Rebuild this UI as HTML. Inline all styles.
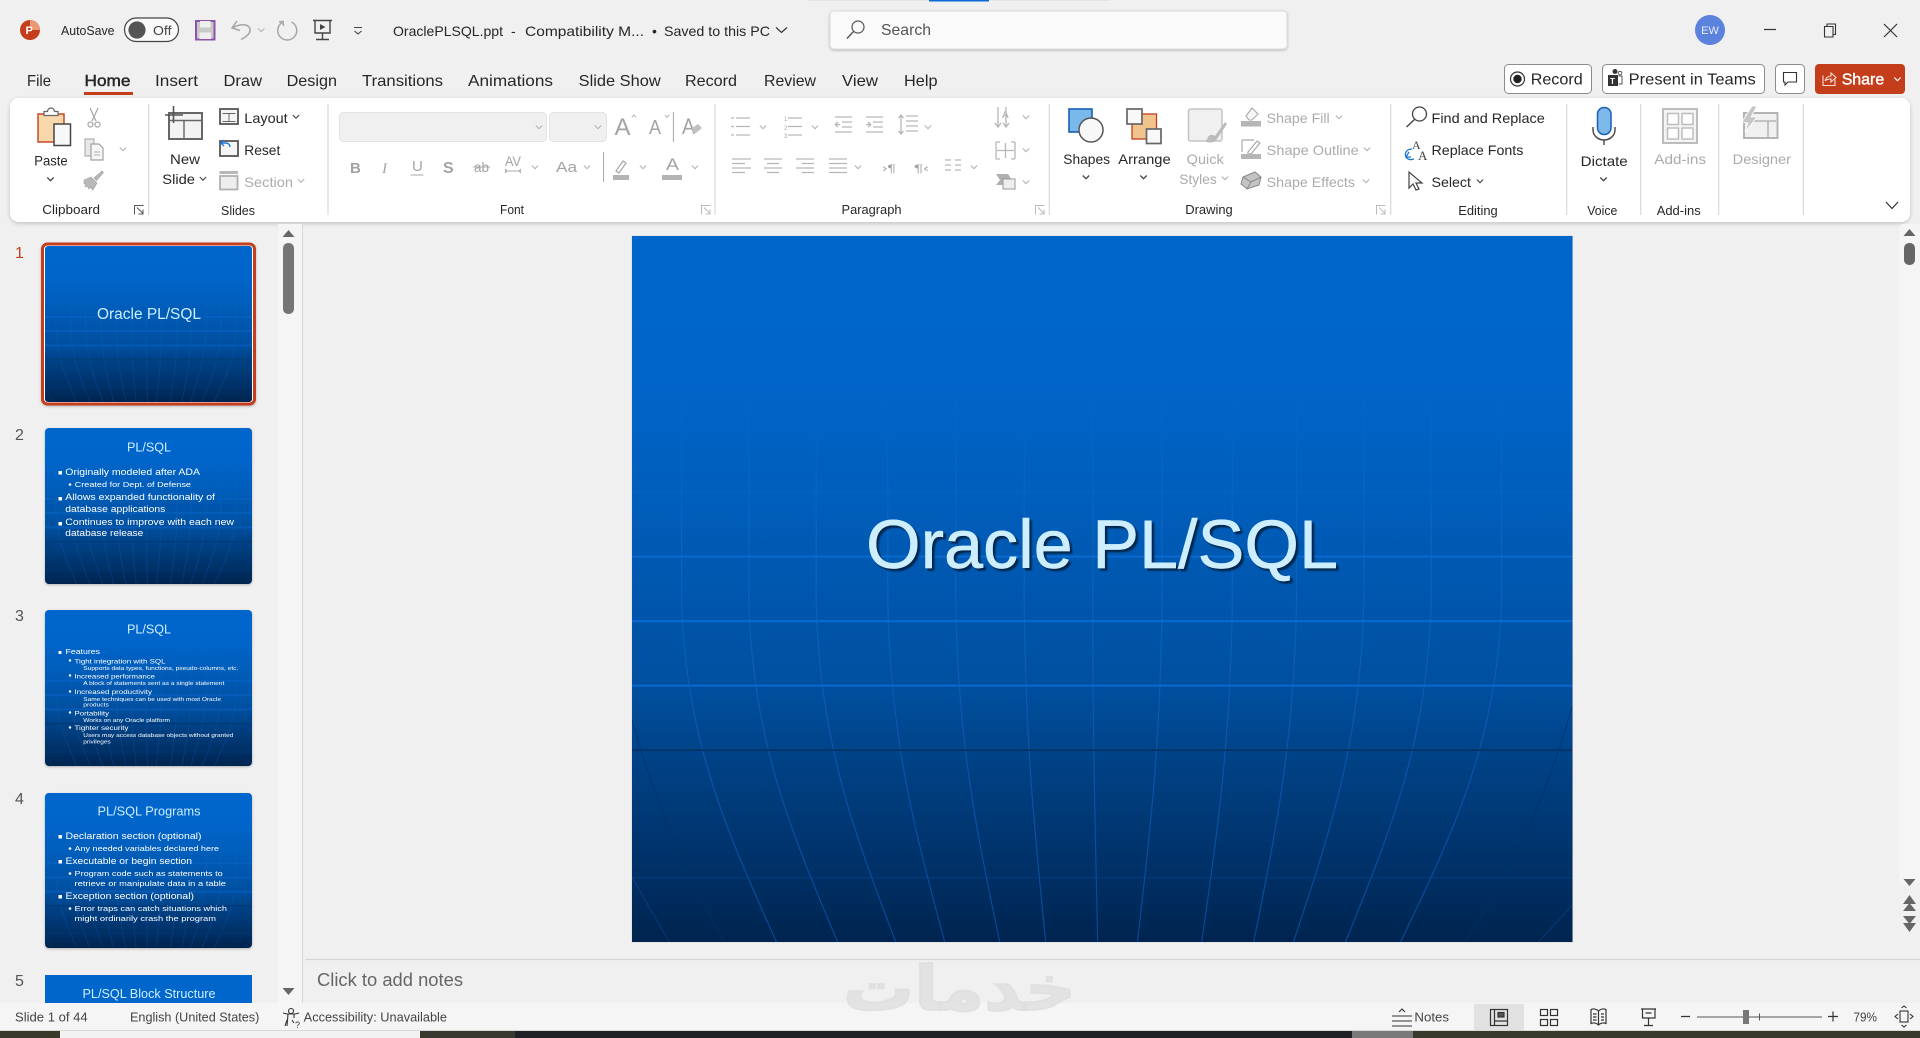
<!DOCTYPE html>
<html><head><meta charset="utf-8"><title>OraclePLSQL.ppt</title>
<style>
html,body{margin:0;padding:0;width:1920px;height:1038px;overflow:hidden;background:#f0f0f0}
svg.page{position:absolute;left:0;top:0;display:block}
text{font-family:"Liberation Sans",sans-serif}
.t{fill:#262626;font-size:14px}
.g{fill:#ababab;font-size:14px}
.tab{fill:#262626;font-size:16px}
.l{fill:#262626;font-size:13px}
.sb{fill:#444;font-size:12.5px}
.b1{fill:#fff;font-family:"DejaVu Sans","Liberation Sans",sans-serif}
.ttl{fill:#cdeeff;font-size:13px;text-anchor:middle}
.dv{stroke:#d9d9d9;stroke-width:1.2}
.ic{fill:none;stroke:#a6a6a6;stroke-width:1.5}
.id{fill:none;stroke:#555;stroke-width:1.5}
.cd{fill:none;stroke:#444;stroke-width:1.1}
.cg{fill:none;stroke:#b4b4b4;stroke-width:1.1}
</style></head><body>
<svg class="page" width="1920" height="1038" viewBox="0 0 1920 1038" xmlns="http://www.w3.org/2000/svg">
<defs>
<linearGradient id="bg" x1="0" y1="0" x2="0" y2="1">
<stop offset="0" stop-color="#0066cc"/><stop offset=".2" stop-color="#0065ca"/><stop offset=".37" stop-color="#005ebb"/><stop offset=".64" stop-color="#004f9f"/><stop offset=".73" stop-color="#004388"/><stop offset=".91" stop-color="#002f64"/><stop offset="1" stop-color="#00244e"/>
</linearGradient>
<linearGradient id="gl" gradientUnits="userSpaceOnUse" x1="0" y1="-400" x2="0" y2="1288">
<stop offset="0" stop-color="#1a72d8" stop-opacity="0"/><stop offset=".3" stop-color="#1a72d8" stop-opacity=".4"/><stop offset="1" stop-color="#0f62cc" stop-opacity=".55"/>
</linearGradient>
<symbol id="grid" viewBox="19 -769 1537 2057" preserveAspectRatio="none">
<g fill="none" stroke="url(#gl)" stroke-width="1.2">
<path vector-effect="non-scaling-stroke" d="M100 -769L100 300C108 700 170 950 255 1288"/>
<path vector-effect="non-scaling-stroke" d="M210 -769L210 300C217 700 275 950 355 1288"/>
<path vector-effect="non-scaling-stroke" d="M320 -769L320 300C326 700 378 950 450 1288"/>
<path vector-effect="non-scaling-stroke" d="M437 -769L437 300C442 700 479 950 530 1288"/>
<path vector-effect="non-scaling-stroke" d="M548 -769L548 300C552 700 580 950 620 1288"/>
<path vector-effect="non-scaling-stroke" d="M660 -769L660 300C662 700 676 950 695 1288"/>
<path vector-effect="non-scaling-stroke" d="M772 -769L772 300C772 700 776 950 780 1288"/>
<path vector-effect="non-scaling-stroke" d="M885 -769L885 300C883 700 867 950 845 1288"/>
<path vector-effect="non-scaling-stroke" d="M1000 -769L1000 300C997 700 977 950 950 1288"/>
<path vector-effect="non-scaling-stroke" d="M1105 -769L1105 300C1101 700 1073 950 1035 1288"/>
<path vector-effect="non-scaling-stroke" d="M1215 -769L1215 300C1209 700 1163 950 1100 1288"/>
<path vector-effect="non-scaling-stroke" d="M1325 -769L1325 300C1318 700 1262 950 1185 1288"/>
<path vector-effect="non-scaling-stroke" d="M1440 -769L1440 300C1432 700 1366 950 1275 1288"/>
<path vector-effect="non-scaling-stroke" opacity=".5" d="M19 1100L80 1288M1556 1180L1500 1288"/>
</g>
<g fill="none" stroke="#003266" stroke-width="1" opacity=".7">
<path vector-effect="non-scaling-stroke" d="M19 640C60 900 110 1100 170 1288M1556 600C1510 880 1460 1080 1380 1288"/>
</g>
<g fill="none">
<path vector-effect="non-scaling-stroke" stroke="#0a6ad0" stroke-opacity=".35" stroke-width="1" d="M19 -211H1556"/>
<path vector-effect="non-scaling-stroke" stroke="#0a6ad0" stroke-opacity=".5" stroke-width="1" d="M19 -23H1556"/>
<path vector-effect="non-scaling-stroke" stroke="#0a6ad0" stroke-width="2" d="M19 165H1556"/>
<path vector-effect="non-scaling-stroke" stroke="#0a6ad0" stroke-width="2" d="M19 353H1556"/>
<path vector-effect="non-scaling-stroke" stroke="#0a6ad0" stroke-width="2" d="M19 541H1556"/>
<path vector-effect="non-scaling-stroke" stroke="#003064" stroke-width="1.6" d="M19 729H1556"/>
<path vector-effect="non-scaling-stroke" stroke="#00458f" stroke-opacity=".55" stroke-width="1.2" d="M19 1100H1556"/>
</g>
</symbol>
<path id="c" d="M-3.2 -1.5L0 1.7 3.2 -1.5"/>
<filter id="sh" x="-2%" y="-10%" width="104%" height="125%"><feDropShadow dx="0" dy="1.5" stdDeviation="2" flood-color="#000" flood-opacity=".2"/></filter>
<filter id="sh2" x="-5%" y="-10%" width="110%" height="125%"><feDropShadow dx="0" dy="1" stdDeviation="1.2" flood-color="#000" flood-opacity=".25"/></filter>
<filter id="sh3" x="-3%" y="-10%" width="106%" height="125%"><feDropShadow dx="2.5" dy="2.5" stdDeviation=".8" flood-color="#00264d" flood-opacity="1"/></filter>
</defs>

<rect width="1920" height="1038" fill="#f0f0f0"/>
<!-- top strip -->
<rect x="808" y="0" width="121" height="1" fill="#e4e4e4"/><rect x="929" y="0" width="60" height="1.5" fill="#0a6ad6"/><rect x="989" y="0" width="121" height="1" fill="#e4e4e4"/>

<!-- title bar -->
<circle cx="30" cy="30" r="10" fill="#c43e1c"/><path d="M30 20a10 10 0 0 1 10 10h-7l-3-3z" fill="#ea9a73"/><text x="25.5" y="34" font-size="11" font-weight="700" fill="#fff">P</text>
<text class="t" x="61" y="35" style="font-size:13px" textLength="53.5" lengthAdjust="spacingAndGlyphs">AutoSave</text>
<rect x="124.5" y="18" width="54" height="23.5" rx="11.7" fill="#fafafa" stroke="#444" stroke-width="1.2"/><circle cx="137" cy="30" r="8.6" fill="#555"/>
<text x="153" y="35" style="font-size:13px" fill="#444" textLength="18.5" lengthAdjust="spacingAndGlyphs">Off</text>
<rect x="196" y="21" width="18.5" height="18.5" fill="#c9c9c9" stroke="#8a55a8" stroke-width="2"/><rect x="200" y="21" width="10.5" height="6.5" fill="#efefef"/><rect x="199.5" y="32.5" width="11.5" height="6.5" fill="#efefef"/>
<path class="ic" d="M237 21L232 28 240 30.5M232 28C243 22 251 25 250 31 249.5 34 246 37 241 39.5"/>
<path class="cg" d="M258 28.5l3.2 3 3.2-3"/>
<path class="ic" d="M283 22A9.5 9.5 0 1 0 291.5 22M279 22l4-.5.5 4.500"/>
<g fill="none" stroke="#444" stroke-width="1.4"><path d="M313 20.5h19M315 20.5v12.5h15v-12.5M322.5 33v6M316 39.5h13"/></g><path d="M320 24l5.5 3-5.5 3z" fill="#444"/>
<path class="cd" d="M354 27.5h8M354.5 31l3.500 3 3.500-3"/>
<g class="t" style="font-size:14px">
<text x="393" y="36" textLength="110" lengthAdjust="spacingAndGlyphs">OraclePLSQL.ppt</text>
<text x="511" y="36">-</text>
<text x="525" y="36" textLength="119" lengthAdjust="spacingAndGlyphs">Compatibility M...</text>
<text x="652" y="36">•</text>
<text x="664" y="36" textLength="106" lengthAdjust="spacingAndGlyphs">Saved to this PC</text>
</g>
<path d="M776 27.5l5.5 5 5.5-5" fill="none" stroke="#333" stroke-width="1.2"/>
<rect x="830" y="11" width="457" height="38" rx="4" fill="#fafafa" stroke="#dedede" filter="url(#sh2)"/>
<circle cx="858" cy="27" r="6" fill="none" stroke="#555" stroke-width="1.2"/><path d="M853.5 31.5L847 38.5" stroke="#555" stroke-width="1.4"/>
<text x="881" y="35" style="font-size:16px" fill="#555" textLength="50" lengthAdjust="spacingAndGlyphs">Search</text>
<circle cx="1710" cy="30" r="15" fill="#5b82dc"/><text x="1710" y="34" text-anchor="middle" style="font-size:11px" fill="#e8eefc">EW</text>
<path d="M1764 29.5h12" stroke="#333" stroke-width="1.2"/>
<path d="M1824.5 26.5h8.5v10.5h-8.5zM1827 26.5v-2.5h8.5v10.5h-2.5" fill="none" stroke="#333" stroke-width="1.1"/>
<path d="M1884 24l13 13M1897 24l-13 13" stroke="#333" stroke-width="1.2"/>

<!-- tabs -->
<g class="tab" style="font-size:16px">
<text x="27" y="86" textLength="24" lengthAdjust="spacingAndGlyphs">File</text>
<text x="84.5" y="86" stroke="#262626" stroke-width=".45" textLength="46" lengthAdjust="spacingAndGlyphs">Home</text>
<text x="155" y="86" textLength="43" lengthAdjust="spacingAndGlyphs">Insert</text>
<text x="223.5" y="86" textLength="38.5" lengthAdjust="spacingAndGlyphs">Draw</text>
<text x="286.6" y="86" textLength="50.4" lengthAdjust="spacingAndGlyphs">Design</text>
<text x="362" y="86" textLength="81" lengthAdjust="spacingAndGlyphs">Transitions</text>
<text x="468" y="86" textLength="85" lengthAdjust="spacingAndGlyphs">Animations</text>
<text x="578.7" y="86" textLength="82" lengthAdjust="spacingAndGlyphs">Slide Show</text>
<text x="685" y="86" textLength="52" lengthAdjust="spacingAndGlyphs">Record</text>
<text x="764" y="86" textLength="52" lengthAdjust="spacingAndGlyphs">Review</text>
<text x="842" y="86" textLength="36" lengthAdjust="spacingAndGlyphs">View</text>
<text x="904" y="86" textLength="33.5" lengthAdjust="spacingAndGlyphs">Help</text>
</g>
<rect x="84" y="92" width="49" height="3" fill="#c43e1c"/>

<!-- top right buttons -->
<rect x="1504.5" y="64.5" width="87" height="29" rx="4" fill="#fff" stroke="#8c8c8c"/>
<circle cx="1517.5" cy="79" r="7" fill="none" stroke="#333" stroke-width="1.2"/><circle cx="1517.5" cy="79" r="4.2" fill="#222"/>
<text x="1530.7" y="84.5" style="font-size:16px" fill="#262626" textLength="52" lengthAdjust="spacingAndGlyphs">Record</text>
<rect x="1602.5" y="64.5" width="162" height="29" rx="4" fill="#fff" stroke="#8c8c8c"/>
<rect x="1608" y="75" width="10" height="11" fill="#333"/><circle cx="1615" cy="71.5" r="2.5" fill="#333"/><path d="M1618.5 76h3.5v8h-3.5" fill="none" stroke="#555"/><circle cx="1620" cy="73" r="1.8" fill="none" stroke="#555"/><text x="1610" y="84" style="font-size:8px;font-weight:700" fill="#fff">T</text>
<text x="1628.7" y="84.5" style="font-size:16px" fill="#262626" textLength="127" lengthAdjust="spacingAndGlyphs">Present in Teams</text>
<rect x="1775.5" y="64.5" width="29" height="29" rx="4" fill="#fff" stroke="#8c8c8c"/>
<path d="M1783.5 72.5h13v9.5h-8.5l-3 3v-3h-1.5z" fill="none" stroke="#333" stroke-width="1.1"/>
<rect x="1815" y="64" width="90" height="30" rx="4" fill="#c43e1c"/>
<path d="M1823 75.5v10h12v-6M1825 81c1-3 3-5 6-5v-3l5 4.5-5 4.5v-3c-3 0-5 1-6 2" fill="none" stroke="#f6dbd2" stroke-width="1.1"/>
<text x="1841.7" y="84.5" style="font-size:16px" fill="#fff" stroke="#fff" stroke-width=".4" textLength="42.5" lengthAdjust="spacingAndGlyphs">Share</text>
<use href="#c" x="1897.5" y="79" fill="none" stroke="#fff" stroke-width="1.1"/>

<!-- ribbon -->
<rect x="10" y="98" width="1900" height="124" rx="9" fill="#fff" filter="url(#sh)"/>
<g class="dv">
<path d="M148.7 104V215M328 104V215M715 104V215M1049.3 104V215M1390.7 104V215M1566.7 104V215M1640.7 104V215M1718.7 104V215M1803.3 104V215"/>
</g>

<!-- group labels -->
<g class="l" style="font-size:13px">
<text x="42.3" y="214" textLength="57.7" lengthAdjust="spacingAndGlyphs">Clipboard</text>
<text x="221" y="215" textLength="34" lengthAdjust="spacingAndGlyphs">Slides</text>
<text x="500" y="214" textLength="24" lengthAdjust="spacingAndGlyphs">Font</text>
<text x="841.5" y="214" textLength="60" lengthAdjust="spacingAndGlyphs">Paragraph</text>
<text x="1185.3" y="214" textLength="47.4" lengthAdjust="spacingAndGlyphs">Drawing</text>
<text x="1458.3" y="215" textLength="39.4" lengthAdjust="spacingAndGlyphs">Editing</text>
<text x="1587.3" y="215" textLength="30" lengthAdjust="spacingAndGlyphs">Voice</text>
<text x="1656.7" y="215" textLength="44" lengthAdjust="spacingAndGlyphs">Add-ins</text>
</g>
<!-- dialog launchers -->
<path d="M134.5 214.5v-9h9M137 207.5l6 6M143 209.5v4.5h-4.5" fill="none" stroke="#555"/>
<g fill="none" stroke="#bbb"><path d="M701.5 214.5v-9h9M704 207.5l6 6M710 209.5v4.5h-4.5"/><path d="M1035.5 214.5v-9h9M1038 207.5l6 6M1044 209.5v4.5h-4.5"/><path d="M1376.5 214.5v-9h9M1379 207.5l6 6M1385 209.5v4.5h-4.5"/></g>

<!-- clipboard -->
<rect x="38" y="114" width="26" height="28" fill="#f8d8ab" stroke="#c43e1c" stroke-width="1.4"/>
<path d="M44 115.5h14v-4h-3.5a3.5 3.5 0 0 0-7 0H44z" fill="#fff" stroke="#666" stroke-width="1.2"/>
<rect x="54" y="124" width="16.5" height="21.5" fill="#f8f8f8" stroke="#444" stroke-width="1.5"/>
<text class="t" x="34.3" y="165.5" textLength="33.4" lengthAdjust="spacingAndGlyphs">Paste</text>
<use href="#c" x="50.5" y="179" class="cd" style="stroke-width:1.3"/>
<g class="ic" style="stroke-width:1.2"><path d="M90 108l6 13M98 108l-6 13"/><circle cx="90.5" cy="124.5" r="2.5"/><circle cx="97.5" cy="124.5" r="2.5"/></g>
<path d="M85 139h9v17h-9z" fill="#e8e8e8" stroke="#b0b0b0" stroke-width="1.2"/><path d="M91 144h8l4 4v12H91z" fill="#f6f6f6" stroke="#a0a0a0" stroke-width="1.2"/><path d="M94 152h6M94 155h6" stroke="#b0b0b0"/>
<use href="#c" x="123" y="149" class="cg"/>
<path d="M84 180l7-3 6 6-4 7-3-3-1 2-2-3-2 1 1-3-2 0zM94 178l8-7 1.5 1.5-7 8z" fill="#b8b8b8" stroke="#a0a0a0" stroke-width=".6"/>

<!-- slides -->
<rect x="169" y="113" width="33" height="26" fill="#f3f3f3" stroke="#666" stroke-width="2"/><path d="M170 120.5h31M184 120.5V138" stroke="#666" stroke-width="1.4"/><path d="M173.5 106v17M165 115h18" stroke="#555" stroke-width="1.6"/>
<text class="t" x="170" y="164" textLength="30" lengthAdjust="spacingAndGlyphs">New</text>
<text class="t" x="162.3" y="184" textLength="32.7" lengthAdjust="spacingAndGlyphs">Slide</text>
<use href="#c" x="203" y="178.5" class="cd"/>
<rect x="220" y="109" width="18" height="15" fill="#f5f5f5" stroke="#555" stroke-width="1.8"/><path d="M222.5 113.5h13M229 113.5v8.5M222.5 121.5h13" stroke="#666" stroke-width="1"/>
<text class="t" x="244.3" y="123" textLength="43.4" lengthAdjust="spacingAndGlyphs">Layout</text>
<use href="#c" x="296" y="116.5" class="cd"/>
<rect x="220" y="141" width="18" height="15" fill="#f5f5f5" stroke="#555" stroke-width="1.8"/><path d="M224 140l-3 3 3 3M221 143h5a4 4 0 0 1 4 4" fill="none" stroke="#1e78d7" stroke-width="1.4"/>
<text class="t" x="244.3" y="155" textLength="36" lengthAdjust="spacingAndGlyphs">Reset</text>
<rect x="219.5" y="171" width="18.5" height="3" fill="#b8b8b8"/><rect x="220" y="176" width="17.5" height="13.5" fill="#eee" stroke="#b0b0b0" stroke-width="1.8"/>
<text class="g" x="244.3" y="187" textLength="48.7" lengthAdjust="spacingAndGlyphs">Section</text>
<use href="#c" x="301" y="180.5" class="cg"/>

<!-- font -->
<rect x="339.5" y="112.5" width="207" height="29" rx="4" fill="#f0f0f0" stroke="#e2e2e2"/>
<rect x="549.5" y="112.5" width="57" height="29" rx="4" fill="#f0f0f0" stroke="#e2e2e2"/>
<use href="#c" x="539" y="127" class="cg"/><use href="#c" x="598" y="127" class="cg"/>
<g fill="#a3a3a3" stroke="none">
<text x="614.5" y="135" style="font-size:24px" textLength="16" lengthAdjust="spacingAndGlyphs">A</text>
<text x="649" y="134" style="font-size:20px" textLength="12" lengthAdjust="spacingAndGlyphs">A</text>
<text x="682" y="134" style="font-size:22px" textLength="13" lengthAdjust="spacingAndGlyphs">A</text>
<text x="350" y="173" style="font-size:15px;font-weight:700">B</text>
<text x="382" y="173" style="font-size:15px;font-style:italic;font-family:'Liberation Serif',serif">I</text>
<text x="412" y="171" style="font-size:15px">U</text>
<text x="443" y="173" style="font-size:16px;font-weight:700">S</text>
<text x="474" y="172" style="font-size:14px" textLength="15" lengthAdjust="spacingAndGlyphs">ab</text>
<text x="505" y="166" style="font-size:14px" textLength="16" lengthAdjust="spacingAndGlyphs">AV</text>
<text x="556" y="172" style="font-size:15px" textLength="21" lengthAdjust="spacingAndGlyphs">Aa</text>
<text x="666" y="170" style="font-size:17px" textLength="13" lengthAdjust="spacingAndGlyphs">A</text>
<text x="882" y="172" style="font-size:11px" textLength="14" lengthAdjust="spacingAndGlyphs">›¶</text>
<text x="914" y="172" style="font-size:11px" textLength="15" lengthAdjust="spacingAndGlyphs">¶‹</text>
<text x="1002" y="118" style="font-size:10px">A</text>
</g>
<path d="M632 117.5l2 -2.5 2 2.5M665 115l2 2.5 2-2.5" fill="none" stroke="#aaa" stroke-width=".9"/>
<path class="ic" style="stroke-width:1" d="M673.4 112v30M603.6 152v30"/>
<path d="M692 128l6-4 4 4-6 5-3.5 0z" fill="#c0c0c0"/>
<path d="M410.5 175h13M473 167h17M505 171h16" stroke="#aaa"/>
<path d="M507 171l-2 -2M507 171l-2 2M519 171l2 -2M519 171l2 2" stroke="#aaa"/>
<rect x="613" y="175" width="16" height="5" fill="#b4b4b4"/><path d="M616 171l7-10 3 2-7 10z" fill="none" stroke="#a8a8a8" stroke-width="1.2"/>
<rect x="662" y="175" width="20" height="5" fill="#b4b4b4"/>
<g class="cg"><use href="#c" x="535" y="167"/><use href="#c" x="587" y="167"/><use href="#c" x="643" y="167"/><use href="#c" x="695" y="167"/></g>

<!-- paragraph -->
<g fill="none" stroke="#b6b6b6" stroke-width="1.3">
<path d="M736 118h14M736 126.5h14M736 135h14M731 118h3M731 126.5h3M731 135h3"/>
<path d="M788 118h14M788 126.5h14M788 135h14"/>
<path d="M835 117h17M842 122h10M842 127h10M835 132h17M835 124.5h5M835 124.5l3-2.5M835 124.5l3 2.5"/>
<path d="M866 117h17M873 122h10M873 127h10M866 132h17M866 124.5h5M871 124.5l-3-2.5M871 124.5l-3 2.5"/>
<path d="M906 116h12M906 121h12M906 126h12M906 131h12M901 115v19M898.5 118l2.5-3 2.5 3M898.5 131l2.5 3 2.5-3"/>
<path d="M732 159h19M732 163.5h13M732 168h19M732 172.5h13"/>
<path d="M764 159h18M767 163.5h12M764 168h18M767 172.5h12"/>
<path d="M796 159h18M802 163.5h12M796 168h18M802 172.5h12"/>
<path d="M829 159h18M829 163.5h18M829 168h18M829 172.5h18"/>
<path d="M945 160h6M945 165h6M945 170h6M955 160h6M955 165h6M955 170h6"/>
<path d="M998 107v20M995 123l3 4 3-4M1006 107v20M1003 123l3 4 3-4"/>
<path d="M996 142h4M996 159h4M996 142v17M1015 142h-4M1015 159h-4M1015 142v17M997 150.5h17M1005.5 143v15"/>
</g>
<text x="784" y="121" style="font-size:6px" fill="#aaa">1</text><text x="784" y="130" style="font-size:6px" fill="#aaa">2</text><text x="784" y="138" style="font-size:6px" fill="#aaa">3</text>
<path d="M996 174h12l4 6-4 5h-12l4-5z" fill="#b0b0b0"/><rect x="1003" y="179" width="12" height="10" fill="#eee" stroke="#999"/>
<g class="cg"><use href="#c" x="763" y="127"/><use href="#c" x="815" y="127"/><use href="#c" x="928" y="127"/><use href="#c" x="858" y="167"/><use href="#c" x="974" y="167"/><use href="#c" x="1026" y="117"/><use href="#c" x="1026" y="150"/><use href="#c" x="1026" y="182"/></g>

<!-- drawing -->
<rect x="1069" y="109" width="23" height="23" fill="#79b8ea" stroke="#1a5fb4" stroke-width="1.6"/><circle cx="1091" cy="130" r="12" fill="#f8f8f8" stroke="#555" stroke-width="1.5"/>
<text class="t" x="1063.3" y="164" textLength="46.7" lengthAdjust="spacingAndGlyphs">Shapes</text><use href="#c" x="1086" y="177" class="cd" style="stroke-width:1.3"/>
<rect x="1132" y="114" width="24.5" height="25" fill="#f2c48d" stroke="#c43e1c" stroke-width="1.3"/>
<rect x="1127" y="109" width="15" height="15" fill="#f8f8f8" stroke="#666" stroke-width="1.7"/><rect x="1146.5" y="129" width="14.5" height="14.5" fill="#f8f8f8" stroke="#666" stroke-width="1.7"/>
<text class="t" x="1118.3" y="164" textLength="52.4" lengthAdjust="spacingAndGlyphs">Arrange</text><use href="#c" x="1143.5" y="177" class="cd" style="stroke-width:1.3"/>
<rect x="1188.5" y="109" width="33.5" height="32" rx="2" fill="#f0f0f0" stroke="#c4c4c4" stroke-width="1.5"/>
<path d="M1225 122l-10 14c-3-2-6-1-7 1l-2 5c4 1 9 1 11-3l10-15z" fill="#bbb"/>
<text class="g" x="1186.7" y="164" textLength="37" lengthAdjust="spacingAndGlyphs">Quick</text>
<text class="g" x="1179.3" y="184" textLength="37.4" lengthAdjust="spacingAndGlyphs">Styles</text><use href="#c" x="1225" y="178" class="cg"/>
<path d="M1246 116l6-8 6 6-6 6-3 0z" fill="#f6f6f6" stroke="#aaa" stroke-width="1.1"/><rect x="1241" y="121" width="20" height="5.5" fill="#b6b6b6"/>
<text class="g" x="1266.7" y="123" textLength="63" lengthAdjust="spacingAndGlyphs">Shape Fill</text><use href="#c" x="1339" y="117" class="cg"/>
<path d="M1242 140h12M1242 140v12M1248 152l9-11 3 2-9 11h-3z" fill="none" stroke="#aaa" stroke-width="1.2"/><rect x="1241" y="154" width="20" height="5" fill="#b6b6b6"/>
<text class="g" x="1266.7" y="155" textLength="92" lengthAdjust="spacingAndGlyphs">Shape Outline</text><use href="#c" x="1367" y="149" class="cg"/>
<path d="M1241 184l2-7 12-5 6 5-2 8-12 4z" fill="#c4c4c4" stroke="#888"/><path d="M1243 177l8 5 10-5M1251 182l-4 7" fill="none" stroke="#888"/>
<text class="g" x="1266.7" y="187" textLength="88.3" lengthAdjust="spacingAndGlyphs">Shape Effects</text><use href="#c" x="1366" y="181" class="cg"/>

<!-- editing -->
<circle cx="1419.5" cy="114" r="7" fill="none" stroke="#444" stroke-width="1.3"/><path d="M1414.5 119.5L1406.5 127" stroke="#444" stroke-width="1.4"/>
<text class="t" x="1431.5" y="123" textLength="113.3" lengthAdjust="spacingAndGlyphs">Find and Replace</text>
<text x="1412" y="149" style="font-size:12px;font-family:'Liberation Serif',serif" fill="#444">A</text><text x="1418" y="160" style="font-size:13px;font-family:'Liberation Serif',serif" fill="#444">A</text>
<path d="M1412 149c-5 0-8 4-6 8M1409 152l-3 5 5 0M1406 157c2 3 5 3 8 2" fill="none" stroke="#1e78d7" stroke-width="1.3"/>
<text class="t" x="1431.5" y="155" textLength="91.9" lengthAdjust="spacingAndGlyphs">Replace Fonts</text>
<path d="M1409 172v16l4-4 3 6 3-1-3-6h6z" fill="#f8f8f8" stroke="#444" stroke-width="1.2"/>
<text class="t" x="1431.5" y="187" textLength="39.5" lengthAdjust="spacingAndGlyphs">Select</text><use href="#c" x="1480" y="181" class="cd"/>

<!-- voice -->
<rect x="1597.5" y="107.5" width="13.5" height="27" rx="6.7" fill="#7db9ea" stroke="#1a5fb4" stroke-width="1.5"/>
<path d="M1593 127v3a11 10 0 0 0 22 0v-3M1604 140v5" fill="none" stroke="#444" stroke-width="1.4"/>
<text class="t" x="1580.7" y="166" textLength="47" lengthAdjust="spacingAndGlyphs">Dictate</text><use href="#c" x="1603.5" y="179" class="cd" style="stroke-width:1.3"/>
<!-- add-ins -->
<rect x="1663" y="109" width="34" height="34" fill="#f4f4f4" stroke="#bdbdbd" stroke-width="2"/>
<g fill="#fff" stroke="#bdbdbd" stroke-width="1.5"><rect x="1667.5" y="113.5" width="11" height="11"/><rect x="1682" y="113.5" width="11" height="11"/><rect x="1667.5" y="128" width="11" height="11"/><rect x="1682" y="128" width="11" height="11"/></g>
<text class="g" x="1654.3" y="164" textLength="51.7" lengthAdjust="spacingAndGlyphs">Add-ins</text>
<!-- designer -->
<rect x="1744" y="113" width="33.5" height="25" fill="#f0f0f0" stroke="#b4b4b4" stroke-width="2"/><path d="M1748 121h28M1768 121v16" stroke="#b4b4b4" stroke-width="1.5"/>
<path d="M1752 106l-10 16 6 1-3 9 12-15h-6l6-11z" fill="#c6c6c6" stroke="#fff" stroke-width=".8"/>
<text class="g" x="1732.7" y="164" textLength="58.3" lengthAdjust="spacingAndGlyphs">Designer</text>
<path d="M1886 202l6 6.5 6-6.5" fill="none" stroke="#333" stroke-width="1.2"/>

<!-- panes -->
<rect x="278" y="224" width="24" height="779" fill="#f5f5f5"/><path d="M302.5 224V1003" stroke="#dadada" stroke-width="1"/>
<path d="M282.5 237l6-7 6 7z" fill="#666"/>
<rect x="283" y="243" width="11" height="71" rx="5" fill="#757575"/>
<path d="M282.5 988l6 7 6-7z" fill="#666"/>

<rect x="1899" y="224" width="21" height="660" rx="4" fill="#f5f5f5"/>
<path d="M1903.5 236l6-7 6 7z" fill="#666"/><rect x="1904" y="243" width="11" height="22" rx="5" fill="#666"/>
<path d="M1903.5 879l6 7 6-7z" fill="#666"/>
<path d="M1903 904l6.5-9 6.5 9zM1903 911l6.5-8 6.5 8z" fill="#666"/>
<path d="M1903 916l6.5 8 6.5-8zM1903 923l6.5 9 6.5-9z" fill="#666"/>

<!-- thumbnails -->
<g>
<rect x="42.5" y="244" width="212" height="160" rx="5" fill="#fff" stroke="#c43e1c" stroke-width="3" filter="url(#sh2)"/>
<rect x="45" y="246" width="207" height="156" rx="3" fill="url(#bg)"/><use href="#grid" x="45" y="246" width="207" height="156" opacity=".4"/>
<text class="ttl" x="149" y="319" style="font-size:15.5px" textLength="104" lengthAdjust="spacingAndGlyphs">Oracle PL/SQL</text>

<rect x="45" y="428" width="207" height="156" rx="4" fill="url(#bg)" filter="url(#sh2)"/><use href="#grid" x="45" y="428" width="207" height="156" opacity=".4"/>
<text class="ttl" x="149" y="451.5" textLength="44" lengthAdjust="spacingAndGlyphs">PL/SQL</text>
<g class="b1">
<rect x="58.5" y="471" width="3.5" height="3.5"/><text x="65.3" y="475" style="font-size:9px" textLength="134.7" lengthAdjust="spacingAndGlyphs">Originally modeled after ADA</text>
<circle cx="70" cy="484.5" r="1.3"/><text x="74.7" y="487" style="font-size:7.5px" textLength="116.3" lengthAdjust="spacingAndGlyphs">Created for Dept. of Defense</text>
<rect x="58.5" y="497" width="3.5" height="3.5"/><text x="65.3" y="500" style="font-size:9px" textLength="149.7" lengthAdjust="spacingAndGlyphs">Allows expanded functionality of</text>
<text x="65.3" y="512" style="font-size:9px" textLength="100" lengthAdjust="spacingAndGlyphs">database applications</text>
<rect x="58.5" y="522" width="3.5" height="3.5"/><text x="65.3" y="525" style="font-size:9px" textLength="168.7" lengthAdjust="spacingAndGlyphs">Continues to improve with each new</text>
<text x="65.3" y="536" style="font-size:9px" textLength="78" lengthAdjust="spacingAndGlyphs">database release</text>
</g>

<rect x="45" y="610" width="207" height="156" rx="4" fill="url(#bg)" filter="url(#sh2)"/><use href="#grid" x="45" y="610" width="207" height="156" opacity=".4"/>
<text class="ttl" x="149" y="633.5" textLength="44" lengthAdjust="spacingAndGlyphs">PL/SQL</text>
<g class="b1">
<rect x="58.5" y="651" width="3" height="3"/><text x="65.5" y="654" style="font-size:7.5px" textLength="34.5" lengthAdjust="spacingAndGlyphs">Features</text>
<circle cx="70" cy="660.5" r="1.2"/><text x="74.5" y="663.5" style="font-size:6.5px" textLength="91" lengthAdjust="spacingAndGlyphs">Tight integration with SQL</text>
<text x="83.3" y="670" style="font-size:5.3px" textLength="155" lengthAdjust="spacingAndGlyphs">Supports data types, functions, pseudo-columns, etc.</text>
<circle cx="70" cy="675.5" r="1.2"/><text x="74.5" y="678.5" style="font-size:6.5px" textLength="80.5" lengthAdjust="spacingAndGlyphs">Increased performance</text>
<text x="83.3" y="685" style="font-size:5.3px" textLength="141" lengthAdjust="spacingAndGlyphs">A block of statements sent as a single statement</text>
<circle cx="70" cy="691.5" r="1.2"/><text x="74.5" y="694" style="font-size:6.5px" textLength="77.5" lengthAdjust="spacingAndGlyphs">Increased productivity</text>
<text x="83.3" y="701" style="font-size:5.3px" textLength="137.7" lengthAdjust="spacingAndGlyphs">Same techniques can be used with most Oracle</text>
<text x="83.3" y="706.5" style="font-size:5.3px" textLength="25.5" lengthAdjust="spacingAndGlyphs">products</text>
<circle cx="70" cy="712.5" r="1.2"/><text x="74.5" y="715.5" style="font-size:6.5px" textLength="34.5" lengthAdjust="spacingAndGlyphs">Portability</text>
<text x="83.3" y="722" style="font-size:5.3px" textLength="86.7" lengthAdjust="spacingAndGlyphs">Works on any Oracle platform</text>
<circle cx="70" cy="727.5" r="1.2"/><text x="74.5" y="730" style="font-size:6.5px" textLength="54" lengthAdjust="spacingAndGlyphs">Tighter security</text>
<text x="83.3" y="737" style="font-size:5.3px" textLength="150" lengthAdjust="spacingAndGlyphs">Users may access database objects without granted</text>
<text x="83.3" y="743.5" style="font-size:5.3px" textLength="27.5" lengthAdjust="spacingAndGlyphs">privileges</text>
</g>

<rect x="45" y="793" width="207" height="155" rx="4" fill="url(#bg)" filter="url(#sh2)"/><use href="#grid" x="45" y="793" width="207" height="155" opacity=".4"/>
<text class="ttl" x="149" y="815.5" textLength="103" lengthAdjust="spacingAndGlyphs">PL/SQL Programs</text>
<g class="b1">
<rect x="58.5" y="835" width="3.5" height="3.5"/><text x="65.5" y="839" style="font-size:9px" textLength="136" lengthAdjust="spacingAndGlyphs">Declaration section (optional)</text>
<circle cx="70" cy="848.5" r="1.3"/><text x="74.5" y="851" style="font-size:7.5px" textLength="144.5" lengthAdjust="spacingAndGlyphs">Any needed variables declared here</text>
<rect x="58.5" y="860" width="3.5" height="3.5"/><text x="65.5" y="864" style="font-size:9px" textLength="126.5" lengthAdjust="spacingAndGlyphs">Executable or begin section</text>
<circle cx="70" cy="873.5" r="1.3"/><text x="74.5" y="876" style="font-size:7.5px" textLength="148.2" lengthAdjust="spacingAndGlyphs">Program code such as statements to</text>
<text x="74.5" y="886" style="font-size:7.5px" textLength="151.5" lengthAdjust="spacingAndGlyphs">retrieve or manipulate data in a table</text>
<rect x="58.5" y="895" width="3.5" height="3.5"/><text x="65.5" y="899" style="font-size:9px" textLength="128.5" lengthAdjust="spacingAndGlyphs">Exception section (optional)</text>
<circle cx="70" cy="908.5" r="1.3"/><text x="74.5" y="911" style="font-size:7.5px" textLength="152.5" lengthAdjust="spacingAndGlyphs">Error traps can catch situations which</text>
<text x="74.5" y="921" style="font-size:7.5px" textLength="141.5" lengthAdjust="spacingAndGlyphs">might ordinarily crash the program</text>
</g>

<rect x="45" y="975" width="207" height="28" fill="#0066cc"/>
<text class="ttl" x="149" y="998" textLength="133" lengthAdjust="spacingAndGlyphs">PL/SQL Block Structure</text>

<g fill="#555">
<text x="15" y="258" style="font-size:16px" fill="#c43e1c">1</text>
<text x="15" y="440" style="font-size:16px">2</text>
<text x="15" y="621" style="font-size:16px">3</text>
<text x="15" y="804" style="font-size:16px">4</text>
<text x="15" y="986" style="font-size:16px">5</text>
</g>
</g>

<!-- main slide -->
<rect x="631.5" y="235.5" width="941.5" height="707" fill="#d8d8d8"/>
<rect x="632" y="236" width="940.5" height="706" fill="url(#bg)"/>
<use href="#grid" x="632" y="236" width="940.5" height="706"/>
<text x="866" y="568" style="font-size:69px" fill="#cdeeff" stroke="#cdeeff" stroke-width=".5" filter="url(#sh3)" textLength="472" lengthAdjust="spacingAndGlyphs">Oracle PL/SQL</text>

<!-- notes -->
<path d="M305 959.5H1920" stroke="#d6d6d6" stroke-width="1.2"/>
<text x="317" y="986" style="font-size:18px" fill="#666" textLength="146" lengthAdjust="spacingAndGlyphs">Click to add notes</text>

<!-- status bar -->
<rect x="0" y="1003" width="1920" height="27" fill="#f5f5f5"/>
<g class="sb" style="font-size:12.5px">
<text x="15" y="1021.5" textLength="72.7" lengthAdjust="spacingAndGlyphs">Slide 1 of 44</text>
<text x="130" y="1021.5" textLength="129.3" lengthAdjust="spacingAndGlyphs">English (United States)</text>
<text x="303.7" y="1021.5" textLength="143.3" lengthAdjust="spacingAndGlyphs">Accessibility: Unavailable</text>
<text x="1414.4" y="1021.5" textLength="34.6" lengthAdjust="spacingAndGlyphs">Notes</text>
<text x="1853.5" y="1021.5" textLength="23.5" lengthAdjust="spacingAndGlyphs">79%</text>
</g>
<g fill="none" stroke="#333" stroke-width="1.1"><circle cx="291" cy="1011" r="2.5"/><path d="M283 1013l4 1h8l4-1M288 1014l-1 12M294 1014v4M287 1020l-2 6M292 1020l2 3"/></g>
<text x="295" y="1028" style="font-size:9px" fill="#333">?</text>
<path d="M1392 1016h20M1392 1021h20M1392 1026h20" stroke="#333" stroke-width="1.1"/><path d="M1399 1012l3-3 3 3" fill="none" stroke="#333" stroke-width="1.1"/>
<rect x="1474" y="1004" width="50" height="26" fill="#e1e1e1"/>
<g fill="none" stroke="#333" stroke-width="1.2">
<rect x="1490.5" y="1009.5" width="17" height="16"/><path d="M1494.5 1009.5v16M1494.5 1021h13"/><rect x="1498" y="1012.5" width="6" height="4.5" fill="#555"/>
<rect x="1540.5" y="1009.5" width="7" height="6"/><rect x="1550.5" y="1009.5" width="7" height="6"/><rect x="1540.5" y="1019.5" width="7" height="6"/><rect x="1550.5" y="1019.5" width="7" height="6"/>
<path d="M1598.5 1011c-2-2-5-2.5-7.5-1.5v14c2.5-1 5.5-.5 7.5 1.5 2-2 5-2.5 7.5-1.5v-14c-2.5-1-5.5-.5-7.5 1.5zM1598.5 1011v14M1593 1014h3.5M1593 1017h3.5M1593 1020h3.5M1601 1014h3M1601 1017h3M1601 1020h3"/>
<path d="M1641 1009h15M1642.5 1009v9h12.5v-9M1645.5 1013h6M1648.5 1018v7M1644 1025.5h9"/>
<path d="M1681 1016.5h9M1828 1016.5h10M1833 1011.5v10"/>
</g>
<path d="M1697 1017H1822M1759.5 1013.5v7" stroke="#555" stroke-width="1"/><rect x="1743" y="1010" width="6" height="14" fill="#777"/>
<g fill="none" stroke="#333" stroke-width="1.1"><rect x="1900" y="1011" width="8" height="11"/><path d="M1898 1014l-3 2.5 3 2.5M1910 1014l3 2.5-3 2.5M1901.5 1008l2.5-2 2.5 2M1901.5 1025l2.5 2 2.5-2"/></g>

<!-- watermark -->
<text x="843" y="1010" style="font-size:62px;font-weight:700;font-family:'DejaVu Sans',sans-serif" fill="#dedede" fill-opacity=".8" stroke="#dedede" stroke-opacity=".8" stroke-width="2" textLength="233" lengthAdjust="spacingAndGlyphs">خدمات</text>

<!-- bottom strip -->
<path d="M0 1030.5H1920" stroke="#d8d8d8"/>
<rect x="0" y="1031" width="60" height="7" fill="#3a3a2a"/>
<rect x="60" y="1031" width="360" height="7" fill="#f2f2f2"/>
<rect x="420" y="1031" width="95" height="7" fill="#38382e"/>
<rect x="515" y="1031" width="837" height="7" fill="#1f2126"/>
<rect x="1352" y="1031" width="61" height="7" fill="#7a7a7a"/>
<rect x="1413" y="1031" width="507" height="7" fill="#383a2e"/>
</svg>
</body></html>
